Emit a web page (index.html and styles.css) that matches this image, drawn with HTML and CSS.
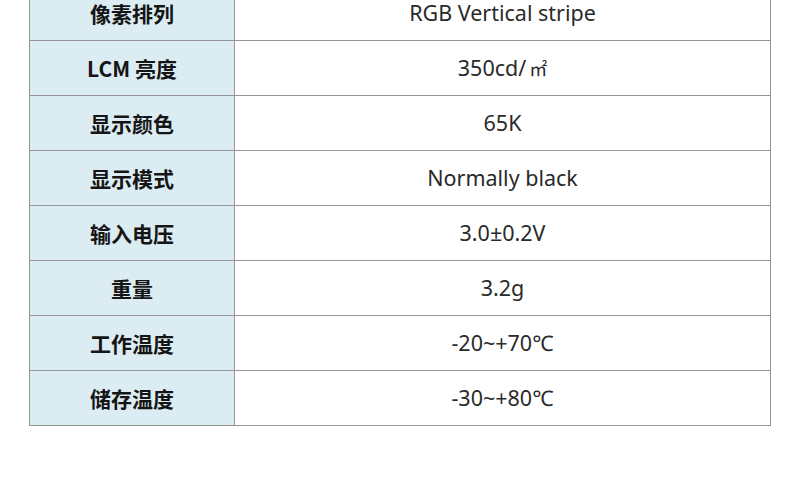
FILE: index.html
```html
<!DOCTYPE html>
<html lang="zh">
<head>
<meta charset="utf-8">
<link rel="stylesheet" href="styles.css">
</head>
<body>
<div class="wrap">
<table class="spec">
<tbody>
<tr><th>像素排列</th><td>RGB Vertical stripe</td></tr>
<tr><th>LCM 亮度</th><td>350cd/<span class="cjk">㎡</span></td></tr>
<tr><th>显示颜色</th><td>65K</td></tr>
<tr><th>显示模式</th><td>Normally black</td></tr>
<tr><th>输入电压</th><td>3.0±0.2V</td></tr>
<tr><th>重量</th><td>3.2g</td></tr>
<tr><th>工作温度</th><td>-20~+70℃</td></tr>
<tr><th>储存温度</th><td>-30~+80℃</td></tr>
</tbody>
</table>
</div>
</body>
</html>
```
FILE: styles.css
```css
html, body {
  margin: 0;
  padding: 0;
  background: #ffffff;
}
body {
  width: 800px;
  height: 493px;
  overflow: hidden;
  font-family: "Noto Sans", "Noto Sans CJK SC", sans-serif;
}
.wrap {
  margin-top: -15px;
  padding-left: 29px;
}
.spec {
  border-collapse: collapse;
  width: 742px;
  table-layout: fixed;
}
.spec tr {
  height: 55px;
}
.spec th,
.spec td {
  border: 1px solid #959595;
  padding: 0;
  text-align: center;
  vertical-align: middle;
  color: #1e1e1e;
  line-height: 24px;
}
.spec th {
  width: 204px;
  background: #dbecf3;
  font-weight: bold;
  font-size: 21px;
  color: #151515;
  font-family: "Noto Sans CJK SC", "Noto Sans", sans-serif;
}
.spec td {
  font-size: 21.5px;
  font-weight: normal;
  color: #2a2a2a;
}
.cjk {
  font-family: "Noto Sans CJK SC", sans-serif;
  font-size: 18px;
  margin-left: 3px;
}
```
